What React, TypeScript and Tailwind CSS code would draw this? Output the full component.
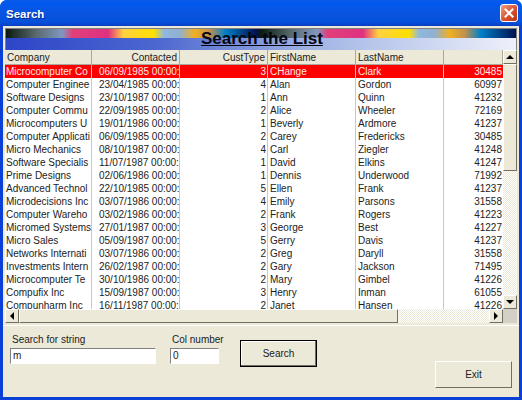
const rows = [
  ['Microcomputer Co', '06/09/1985 00:00:', '3', 'CHange', 'Clark', '30485'],
  ['Computer Enginee', '23/04/1985 00:00:', '4', 'Alan', 'Gordon', '60997'],
  ['Software Designs', '23/10/1987 00:00:', '1', 'Ann', 'Quinn', '41232'],
  ['Computer Commu', '22/09/1985 00:00:', '2', 'Alice', 'Wheeler', '72169'],
  ['Microcomputers U', '19/01/1986 00:00:', '1', 'Beverly', 'Ardmore', '41237'],
  ['Computer Applicati', '06/09/1985 00:00:', '2', 'Carey', 'Fredericks', '30485'],
  ['Micro Mechanics', '08/10/1987 00:00:', '4', 'Carl', 'Ziegler', '41248'],
  ['Software Specialis', '11/07/1987 00:00:', '1', 'David', 'Elkins', '41247'],
  ['Prime Designs', '02/06/1986 00:00:', '1', 'Dennis', 'Underwood', '71992'],
  ['Advanced Technol', '22/10/1985 00:00:', '5', 'Ellen', 'Frank', '41237'],
  ['Microdecisions Inc', '03/07/1986 00:00:', '4', 'Emily', 'Parsons', '31558'],
  ['Computer Wareho', '03/02/1986 00:00:', '2', 'Frank', 'Rogers', '41223'],
  ['Micromed Systems', '27/01/1987 00:00:', '3', 'George', 'Best', '41227'],
  ['Micro Sales', '05/09/1987 00:00:', '5', 'Gerry', 'Davis', '41237'],
  ['Networks Internati', '03/07/1986 00:00:', '2', 'Greg', 'Daryll', '31558'],
  ['Investments Intern', '26/02/1987 00:00:', '2', 'Gary', 'Jackson', '71495'],
  ['Microcomputer Te', '30/10/1986 00:00:', '2', 'Mary', 'Gimbel', '41226'],
  ['Compufix Inc', '15/09/1987 00:00:', '3', 'Henry', 'Inman', '61055'],
  ['Compunharm Inc', '16/11/1987 00:00:', '2', 'Janet', 'Hansen', '41226'],
]

const raised = 'border border-t-white border-l-white border-r-[#716f64] border-b-[#716f64]'
const sunken = 'border border-t-[#808080] border-l-[#808080] border-r-white border-b-white'

function Arrow({ dir }: { dir: 'up' | 'down' | 'left' | 'right' }) {
  const points = { up: '4,0 0,4 8,4', down: '0,0 8,0 4,4', left: '4,0 4,8 0,4', right: '0,0 4,4 0,8' }[dir]
  return (
    <svg width={dir === 'up' || dir === 'down' ? 8 : 4} height={dir === 'up' || dir === 'down' ? 4 : 8}>
      <polygon points={points} fill="#000" />
    </svg>
  )
}

function ScrollButton({ dir }: { dir: 'up' | 'down' | 'left' | 'right' }) {
  return (
    <div className={`flex h-[14px] w-[14px] shrink-0 items-center justify-center bg-[#ece9d8] ${raised}`}>
      <Arrow dir={dir} />
    </div>
  )
}

function Header({ label, width, right }: { label: string; width: string; right?: boolean }) {
  return (
    <div className={`flex h-[15px] shrink-0 items-center bg-[#ece9d8] px-[2px] ${width} ${right ? 'justify-end' : ''} border-r border-r-[#aca899] border-b border-b-[#aca899]`}>
      {label}
    </div>
  )
}

export default function App() {
  return (
    <div className="flex h-[400px] w-[522px] flex-col overflow-hidden rounded-t-[7px] bg-[#0a3fd8] font-['Liberation_Sans',sans-serif] text-[10px] text-[#222]">
      <div className="flex h-[26px] shrink-0 items-center justify-between bg-[linear-gradient(180deg,#0a5ce8_0%,#0058ee_12%,#0a55e0_50%,#0650dc_85%,#0a3fc0_100%)] pl-[6px] pr-[4px]">
        <span className="pt-[3px] text-[11.5px] font-bold text-white [text-shadow:1px_1px_0_#0a2a90]">Search</span>
        <div className="flex h-[18px] w-[18px] items-center justify-center rounded-[3px] border border-white bg-[linear-gradient(135deg,#f0a088,#d9502c_55%,#b8341a)]">
          <svg width="10" height="10" viewBox="0 0 10 10">
            <path d="M1.5 1.5 L8.5 8.5 M8.5 1.5 L1.5 8.5" stroke="#fff" strokeWidth="2" strokeLinecap="square" />
          </svg>
        </div>
      </div>

      <div className="mx-[3px] mb-[3px] flex min-h-0 flex-1 flex-col bg-[#ece9d8]">
        <div className="mx-[2px] mt-[2px] flex h-[22px] shrink-0 flex-col border border-[#808080] border-b-0">
          <div className="flex h-[9px] bg-[linear-gradient(90deg,#0a1a10_0%,#5a6a70_6%,#8098c0_11%,#e0407a_13%,#e03080_20%,#ffd040_23%,#ffe000_29%,#90b8e0_31%,#90b0d0_34%,#f0b020_37%,#c09050_40%,#0080c8_43%,#001050_49%,#0a1a10_50%,#5a6a70_56%,#8098c0_61%,#e0407a_63%,#e03080_70%,#ffd040_73%,#ffe000_79%,#90b8e0_81%,#90b0d0_84%,#f0b020_87%,#c09050_90%,#0080c8_93%,#001050_100%)]" />
          <div className="relative h-[12px] bg-[linear-gradient(90deg,#2d45c8_0%,#4d68d0_30%,#a0b4e4_60%,#eef0fa_100%)]">
            <span className="absolute left-[195px] top-[-9px] text-[17px] leading-[20px] font-bold whitespace-nowrap text-[#050510] underline">Search the List</span>
          </div>
        </div>

        <div className="mx-[2px] mb-[2px] flex min-h-0 flex-1 flex-col overflow-hidden">
          <div className="flex min-h-0 flex-1">
            <div className="flex min-w-0 flex-1 flex-col overflow-hidden bg-white">
              <div className="flex shrink-0">
                <Header label="Company" width="w-[87px]" />
                <Header label="Contacted" width="w-[88px]" right />
                <Header label="CustType" width="w-[88px]" right />
                <Header label="FirstName" width="w-[88px]" />
                <Header label="LastName" width="w-[88px]" />
                <Header label="" width="w-[59px]" />
              </div>
              {rows.map((r, i) => (
                <div key={i} className={`flex h-[13px] shrink-0 leading-[13px] ${i === 0 ? 'bg-[#ff0000] text-[#ffe8e8]' : ''}`}>
                  <div className="w-[87px] shrink-0 overflow-hidden border-r border-[#c8c8c8] pl-[1px] whitespace-nowrap">{r[0]}</div>
                  <div className="w-[88px] shrink-0 overflow-hidden border-r border-[#c8c8c8] pl-[7px] whitespace-nowrap">{r[1]}</div>
                  <div className="w-[88px] shrink-0 border-r border-[#c8c8c8] pr-[1px] text-right">{r[2]}</div>
                  <div className="w-[88px] shrink-0 border-r border-[#c8c8c8] pl-[2px]">{r[3]}</div>
                  <div className="w-[88px] shrink-0 border-r border-[#c8c8c8] pl-[2px]">{r[4]}</div>
                  <div className="w-[59px] shrink-0 pr-[1px] text-right">{r[5]}</div>
                </div>
              ))}
            </div>
            <div className="flex w-[14px] shrink-0 flex-col bg-[#f4f2e8]">
              <ScrollButton dir="up" />
              <div className={`h-[107px] bg-[#ece9d8] ${raised}`} />
              <div className="flex-1 bg-[repeating-conic-gradient(#ece9d8_0%_25%,#fff_0%_50%)] bg-[length:2px_2px]" />
              <ScrollButton dir="down" />
            </div>
          </div>
          <div className="flex h-[14px] shrink-0">
            <ScrollButton dir="left" />
            <div className={`w-[379px] bg-[#ece9d8] ${raised}`} />
            <div className="flex-1 bg-[repeating-conic-gradient(#ece9d8_0%_25%,#fff_0%_50%)] bg-[length:2px_2px]" />
            <ScrollButton dir="right" />
            <div className="w-[14px] shrink-0 bg-[#d4d0c8]" />
          </div>
        </div>

        <div className="flex h-[72px] shrink-0 border-t border-t-white pt-[7px] pr-[7px] pl-[7px]">
          <div className="flex w-[146px] flex-col">
            <label className="mb-[2px] pl-[2px] leading-[13px]">Search for string</label>
            <div className={`h-[16px] w-[146px] bg-white pl-[2px] leading-[14px] ${sunken}`}>m</div>
          </div>
          <div className="ml-[14px] flex w-[49px] flex-col">
            <label className="mb-[2px] pl-[2px] leading-[13px] whitespace-nowrap">Col number</label>
            <div className={`h-[16px] w-[49px] bg-white pl-[2px] leading-[14px] ${sunken}`}>0</div>
          </div>
          <button className="mt-[7px] ml-[21px] h-[27px] w-[77px] border border-black bg-[#ece9d8] shadow-[inset_-1px_-1px_0_#716f64,inset_1px_1px_0_#fff]">Search</button>
          <button className={`mt-[28px] ml-auto h-[27px] w-[77px] bg-[#ece9d8] ${raised}`}>Exit</button>
        </div>
      </div>
    </div>
  )
}
